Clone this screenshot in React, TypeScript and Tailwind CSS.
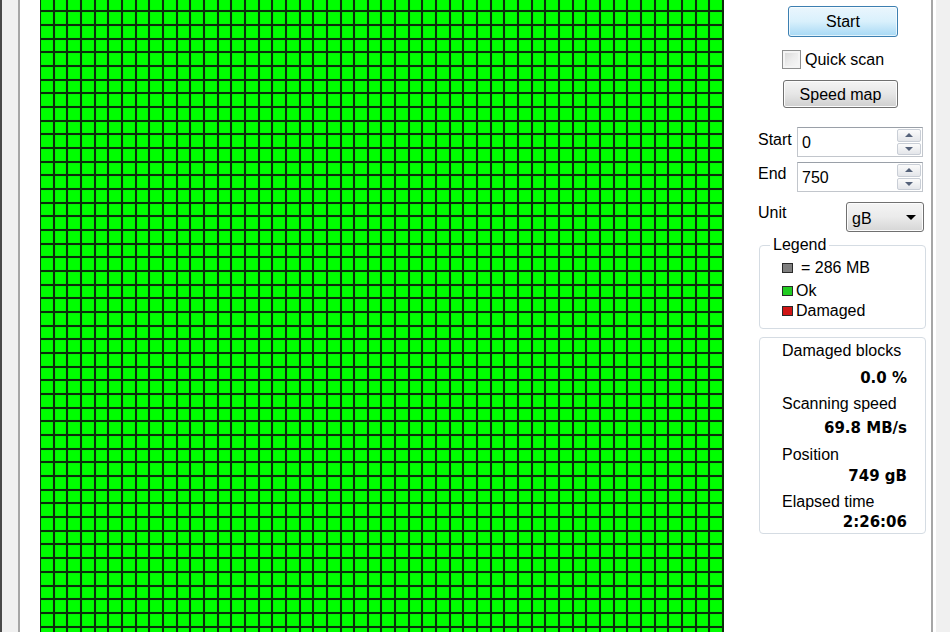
import React from 'react';

const COLS = 50;
const ROWS = 47;

const cells = Array.from({ length: COLS * ROWS }, (_, i) => i);

const SpinBox: React.FC<{ value: string }> = ({ value }) => (
  <div className="flex h-[30px] w-[126px] border border-[#c2c6cc] border-t-[#9aa0a8] bg-white">
    <div className="flex-1 pl-[4px] pt-[5px] leading-[20px]">{value}</div>
    <div className="flex w-[25px] flex-col gap-[1px] py-[1px] pr-[1px]">
      <div className="flex flex-1 items-center justify-center rounded-[2px] border border-[#c9ced6] bg-gradient-to-b from-[#fbfbfb] to-[#e4e6ea]">
        <div className="h-0 w-0 border-x-[4px] border-b-[4px] border-x-transparent border-b-[#55627a]" />
      </div>
      <div className="flex flex-1 items-center justify-center rounded-[2px] border border-[#c9ced6] bg-gradient-to-b from-[#fbfbfb] to-[#e4e6ea]">
        <div className="h-0 w-0 border-x-[4px] border-t-[4px] border-x-transparent border-t-[#55627a]" />
      </div>
    </div>
  </div>
);

const Swatch: React.FC<{ color: string }> = ({ color }) => (
  <span className={`inline-block h-[10px] w-[11px] border border-[#2a2a2a] ${color}`} />
);

const App: React.FC = () => {
  return (
    <div className="flex h-[632px] w-[950px] overflow-hidden bg-white font-['Liberation_Sans',Arial,sans-serif] text-[16px] text-black">
      {/* left window chrome */}
      <div className="w-[2px] bg-[#4a4a4a]" />
      <div className="w-[16px] bg-[#f0f0f0]" />
      <div className="w-[2px] bg-[#a6a6a6]" />
      <div className="w-[20px] bg-white" />

      {/* block map */}
      <div className="w-[684px] shrink-0 overflow-hidden border-l border-[#0c2e0c] bg-[#0c2e0c]">
        <div className="-mt-[1.4px] grid grid-cols-[repeat(50,1fr)] auto-rows-[13.68px]">
          {cells.map((i) => (
            <div
              key={i}
              className="border-b-[2px] border-r-[2px] border-[#0c2e0c] bg-[#00ff00] shadow-[inset_0_0_1px_#149a14]"
            />
          ))}
        </div>
      </div>

      {/* control panel */}
      <div className="flex w-[207px] shrink-0 flex-col bg-white pl-[34px]">
        <button className="ml-[30px] mt-[6px] h-[31px] w-[110px] rounded-[3px] border border-[#3c7fb1] bg-gradient-to-b from-[#eaf6fd] via-[#d9f0fc] to-[#a7d9f5] leading-[28px] shadow-[inset_0_0_0_1px_#ffffffaa]">
          Start
        </button>

        <label className="ml-[24px] mt-[13px] flex h-[19px] items-center gap-[4px]">
          <span className="h-[19px] w-[19px] border border-[#8e8f8f] bg-gradient-to-br from-[#d4d4d4] via-[#ececec] to-[#f8f8f8] shadow-[inset_0_0_0_2px_#f4f4f4]" />
          <span className="leading-[20px]">Quick scan</span>
        </label>

        <button className="ml-[25px] mt-[11px] h-[28px] w-[115px] rounded-[3px] border border-[#707070] bg-gradient-to-b from-[#f4f4f4] via-[#e6e6e6] to-[#cfcfcf] leading-[25px] shadow-[inset_0_0_0_1px_#fcfcfc]">
          Speed map
        </button>

        <div className="mt-[19px] flex">
          <span className="w-[39px] pt-[2px] leading-[22px]">Start</span>
          <SpinBox value="0" />
        </div>

        <div className="mt-[5px] flex">
          <span className="w-[39px] pt-[1px] leading-[22px]">End</span>
          <SpinBox value="750" />
        </div>

        <div className="mt-[10px] flex">
          <span className="w-[88px] pt-[1px] leading-[20px]">Unit</span>
          <div className="flex h-[30px] w-[78px] items-center justify-between rounded-[3px] border border-[#707070] bg-gradient-to-b from-[#f4f4f4] via-[#ebebeb] to-[#d6d6d6] pl-[5px] pr-[7px] shadow-[inset_0_0_0_1px_#fcfcfc]">
            <span className="pt-[3px] leading-[20px]">gB</span>
            <span className="h-0 w-0 border-x-[5px] border-t-[5px] border-x-transparent border-t-black" />
          </div>
        </div>

        <fieldset className="ml-[1px] mt-[3px] w-[167px] rounded-[4px] border border-[#d5dce3] pb-[6px] pl-[22px]">
          <legend className="-ml-[12px] px-[3px] leading-[20px]">Legend</legend>
          <div className="mt-[2px] flex h-[22px] items-center">
            <Swatch color="bg-[#7f7f7f]" />
            <span className="ml-[8px]">= 286 MB</span>
          </div>
          <div className="mt-[1px] flex h-[22px] items-center">
            <Swatch color="bg-[#22cc22]" />
            <span className="ml-[3px]">Ok</span>
          </div>
          <div className="-mt-[2px] flex h-[22px] items-center">
            <Swatch color="bg-[#d01515]" />
            <span className="ml-[3px]">Damaged</span>
          </div>
        </fieldset>

        <div className="ml-[1px] mt-[8px] flex h-[197px] w-[167px] flex-col rounded-[4px] border border-[#d5dce3] pl-[22px] pr-[18px] pt-[2px] leading-[22px]">
          <span>Damaged blocks</span>
          <span className="mt-[5px] text-right font-['DejaVu_Sans',sans-serif] text-[15px] font-bold">0.0 %</span>
          <span className="mt-[4px]">Scanning speed</span>
          <span className="mt-[2px] text-right font-['DejaVu_Sans',sans-serif] text-[15px] font-bold">69.8 MB/s</span>
          <span className="mt-[5px]">Position</span>
          <span className="-mt-[1px] text-right font-['DejaVu_Sans',sans-serif] text-[15px] font-bold">749 gB</span>
          <span className="mt-[4px]">Elapsed time</span>
          <span className="-mt-[2px] text-right font-['DejaVu_Sans',sans-serif] text-[15px] font-bold">2:26:06</span>
        </div>
      </div>

      {/* right window chrome */}
      <div className="w-[2px] bg-[#a6a6a6]" />
      <div className="w-[3px] bg-white" />
      <div className="flex-1 bg-[#f0f0f0]" />
    </div>
  );
};

export default App;
